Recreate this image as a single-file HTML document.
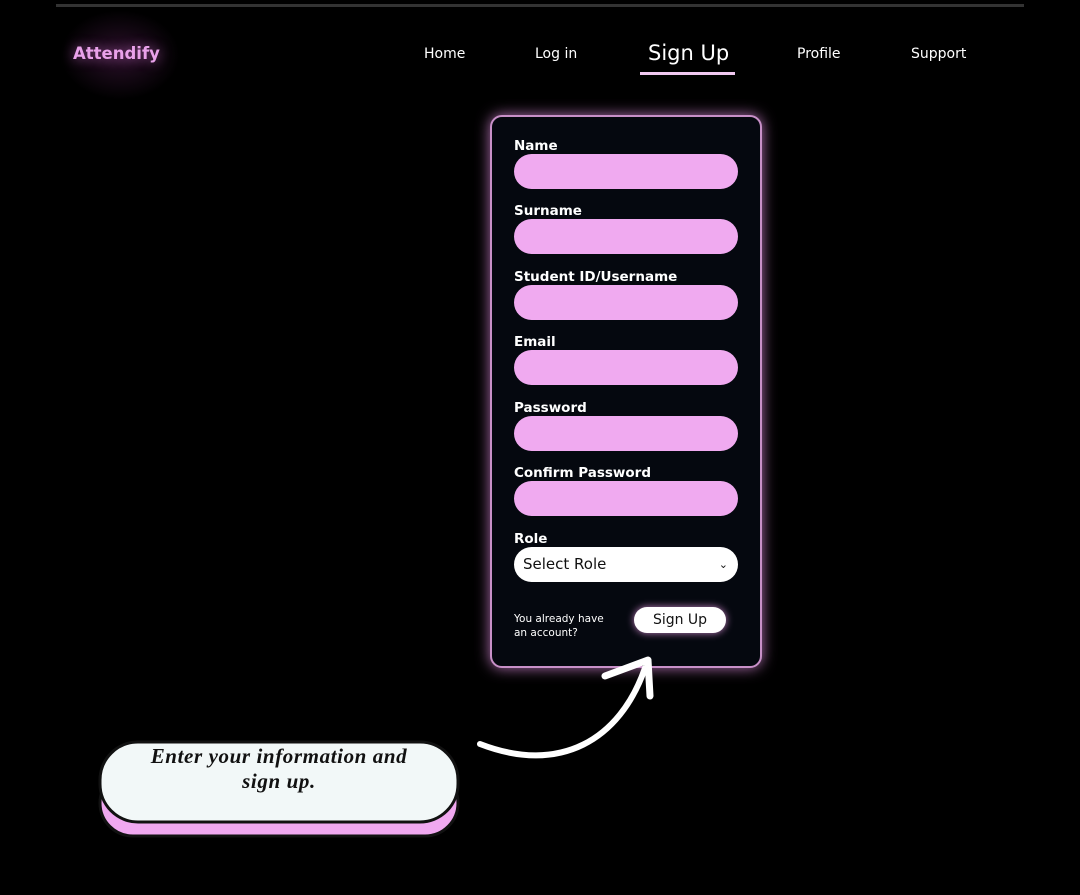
<!DOCTYPE html>
<html><head><meta charset="utf-8"><style>
body{margin:0;width:1080px;height:895px;background:#000;position:relative;overflow:hidden;font-family:"DejaVu Sans","Liberation Sans",sans-serif;}
.bar{position:absolute;left:56px;top:4px;width:968px;height:3px;background:#333;}
.logo{position:absolute;left:73px;top:44px;color:#e9a2ea;font-size:16.5px;font-weight:bold;text-shadow:0 0 12px #a05aa0;}
.glow{position:absolute;left:60px;top:10px;width:120px;height:90px;background:radial-gradient(ellipse,#2a1029 0%,#000 70%);}
.nav{position:absolute;top:46px;color:#fff;font-size:14px;}
.card{position:absolute;left:490px;top:115px;width:268px;height:549px;background:#05080f;border:2px solid #c890c8;border-radius:12px;box-shadow:0 0 14px #b070b0;}
.lab{position:absolute;left:514px;color:#fff;font-size:13.5px;font-weight:bold;}
.in{position:absolute;left:514px;width:224px;height:35px;border-radius:18px;background:#f0aaf0;}
</style></head><body>
<div class="bar"></div>
<div class="glow"></div>
<div class="logo">Attendify</div>
<div class="nav" style="left:424px">Home</div>
<div class="nav" style="left:535px">Log in</div>
<div class="nav" style="left:648px;top:41px;font-size:21px">Sign Up</div>
<div style="position:absolute;left:640px;top:72px;width:95px;height:3px;background:#f0c8f0"></div>
<div class="nav" style="left:797px">Profile</div>
<div class="nav" style="left:911px">Support</div>
<div class="card"></div>
<div class="lab" style="top:138px">Name</div><div class="in" style="top:154px"></div>
<div class="lab" style="top:203px">Surname</div><div class="in" style="top:219px"></div>
<div class="lab" style="top:269px">Student ID/Username</div><div class="in" style="top:285px"></div>
<div class="lab" style="top:334px">Email</div><div class="in" style="top:350px"></div>
<div class="lab" style="top:400px">Password</div><div class="in" style="top:416px"></div>
<div class="lab" style="top:465px">Confirm Password</div><div class="in" style="top:481px"></div>
<div class="lab" style="top:531px">Role</div>
<div class="in" style="top:547px;background:#fff;color:#111;font-size:15px;line-height:35px;padding-left:9px;width:215px">Select Role<span style="position:absolute;right:10px;font-size:11px">&#8964;</span></div>
<div style="position:absolute;left:514px;top:612px;color:#fff;font-size:10.5px;line-height:14px">You already have<br>an account?</div>
<div style="position:absolute;left:634px;top:607px;width:92px;height:26px;border-radius:13px;background:#fff;color:#111;font-size:14px;text-align:center;line-height:27px;box-shadow:0 0 8px #c080c0">Sign Up</div>
<svg style="position:absolute;left:0;top:0" width="1080" height="895">
<path d="M480 744 C560 775 620 740 645 668" stroke="#fff" stroke-width="6" fill="none" stroke-linecap="round"/>
<path d="M605 676 L648 660 L650 696" stroke="#fff" stroke-width="7" fill="none" stroke-linecap="round" stroke-linejoin="round"/>
<rect x="100" y="770" width="358" height="66" rx="33" fill="#f0a8f0" stroke="#111" stroke-width="3"/>
<rect x="100" y="742" width="358" height="80" rx="38" fill="#f2f8f8" stroke="#111" stroke-width="3"/>
</svg>
<div style="position:absolute;left:100px;top:744px;width:358px;text-align:center;font-family:'Liberation Serif',serif;font-style:italic;font-weight:bold;font-size:21px;letter-spacing:0.6px;line-height:25px;color:#111">Enter your information and<br>sign up.</div>
</body></html>
